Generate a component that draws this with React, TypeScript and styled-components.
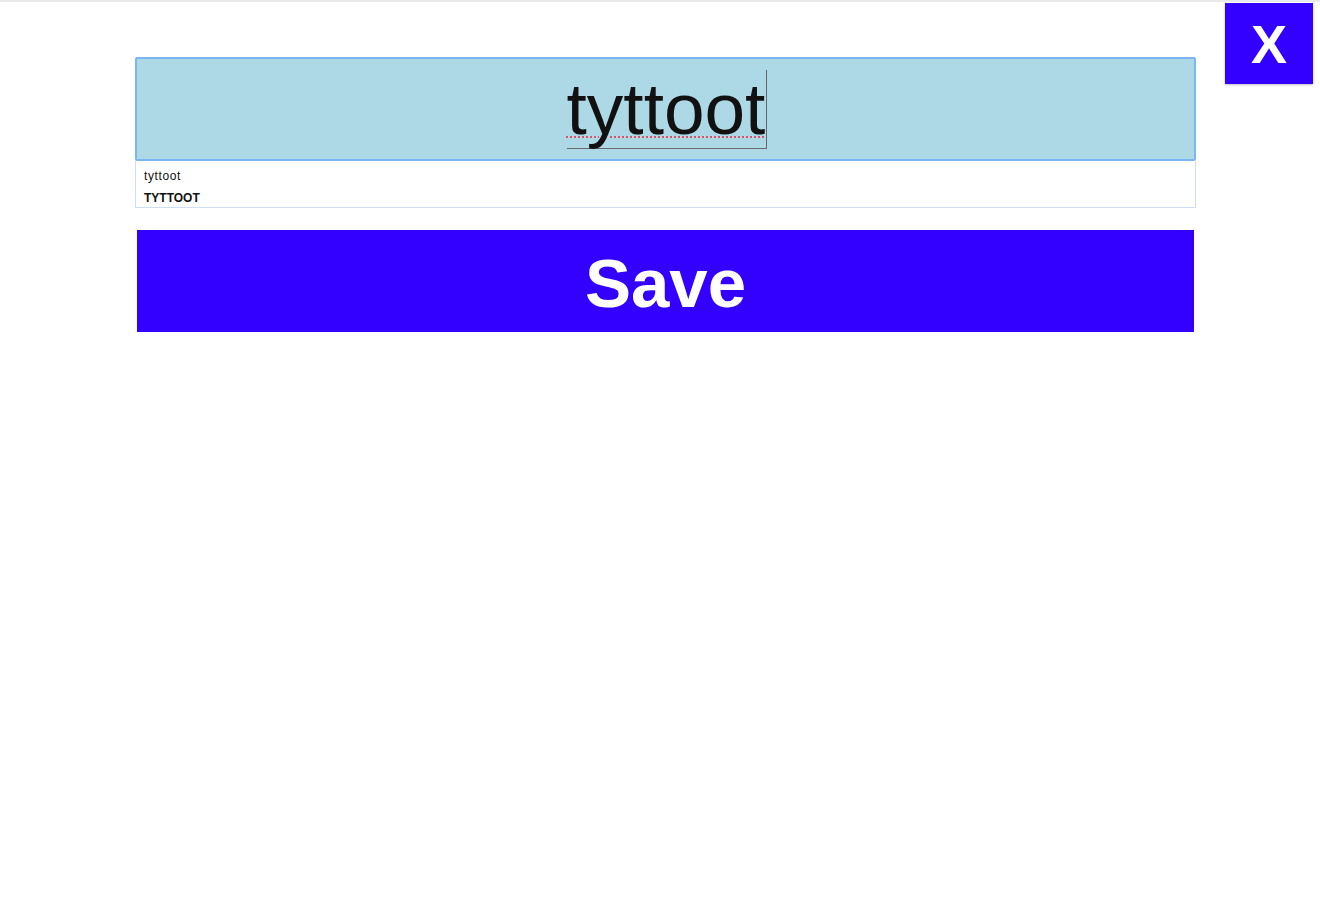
import React from 'react';
import styled, { createGlobalStyle } from 'styled-components';

const GlobalStyle = createGlobalStyle`
  html, body {
    margin: 0;
    padding: 0;
    background: #fff;
    font-family: 'Liberation Sans', Arial, sans-serif;
  }
  body {
    border-top: 2px solid #e9e9ec;
  }
`;

const suggestions = [
  { label: 'tyttoot', bold: false },
  { label: 'TYTTOOT', bold: true },
];

const App = () => {
  return (
    <>
      <GlobalStyle />
      <Page>
        <CloseButton>X</CloseButton>
        <Form>
          <Field>
            <Typed>tyttoot</Typed>
          </Field>
          <SuggestList>
            {suggestions.map((s, i) => (
              <Suggest bold={s.bold} key={i}>{s.label}</Suggest>
            ))}
          </SuggestList>
          <SaveButton>Save</SaveButton>
        </Form>
      </Page>
    </>
  );
};

const Page = styled.div`
  position: relative;
  width: 1320px;
  min-height: 898px;
  box-sizing: border-box;
  padding: 55px 0 0 135px;
`;

const CloseButton = styled.div`
  position: absolute;
  top: 1px;
  left: 1225px;
  width: 88px;
  height: 81px;
  background: #3300ff;
  color: #fff;
  font-weight: 700;
  font-size: 54px;
  display: flex;
  align-items: center;
  justify-content: center;
  box-shadow: 0 1px 2px rgba(0,0,0,0.25);
`;

const Form = styled.div`
  width: 1061px;
  display: flex;
  flex-direction: column;
`;

const Field = styled.div`
  height: 104px;
  box-sizing: border-box;
  background: #add8e6;
  border: 2px solid #7bb6f2;
  border-radius: 2px;
  display: flex;
  align-items: center;
  justify-content: center;
  padding-left: 3px;
`;

const Typed = styled.span`
  font-family: 'Liberation Sans', Arial, sans-serif;
  font-size: 73px;
  line-height: 78px;
  color: #111;
  border-bottom: 1px solid #6a6a6a;
  border-right: 1px solid #666;
  padding-right: 1px;
  text-decoration: underline dotted #e0506a;
  text-underline-offset: 3px;
  text-decoration-thickness: 2px;
`;

const SuggestList = styled.div`
  height: 47px;
  box-sizing: border-box;
  border: 1px solid #cfdff3;
  border-top: none;
  padding: 9px 0 0 8px;
  display: flex;
  flex-direction: column;
  gap: 9px;
`;

const Suggest = styled.div<{ bold: boolean }>`
  font-size: 12px;
  line-height: 13px;
  color: #111;
  font-weight: ${({ bold }) => (bold ? 700 : 400)};
  letter-spacing: ${({ bold }) => (bold ? '0' : '0.6px')};
`;

const SaveButton = styled.div`
  margin: 22px 2px 0 2px;
  height: 102px;
  background: #3300ff;
  color: #fff;
  font-weight: 700;
  font-size: 69px;
  display: flex;
  align-items: center;
  justify-content: center;
  padding-top: 4px;
  box-sizing: border-box;
`;

export default App;
